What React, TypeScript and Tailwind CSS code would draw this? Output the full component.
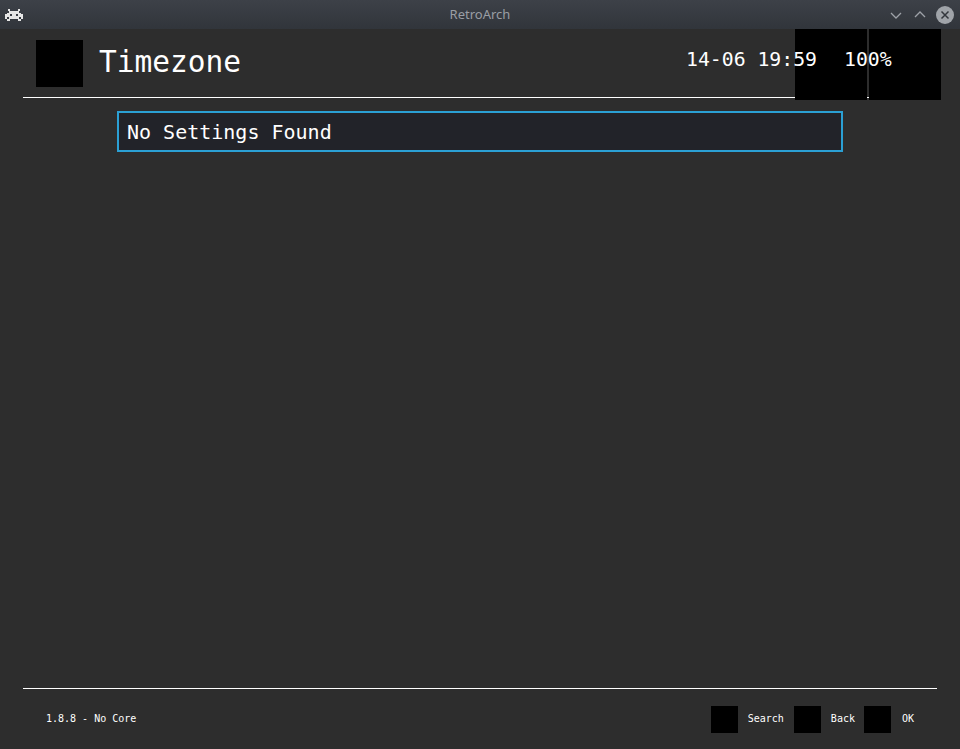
import React from "react";

const mono = "font-['DejaVu_Sans_Mono','Liberation_Mono',monospace]";

function TitleBar() {
  return (
    <div className="relative flex h-[29px] items-center bg-gradient-to-b from-[#3d4148] to-[#31353b]">
      {/* app icon */}
      <svg width="18" height="12" viewBox="0 0 18 12" className="ml-[5px]" shapeRendering="crispEdges">
        <g fill="#e6e6e6">
          <rect x="3" y="0" width="2" height="2" />
          <rect x="13" y="0" width="2" height="2" />
          <rect x="4" y="2" width="10" height="2" />
          <rect x="2" y="4" width="14" height="4" />
          <rect x="0" y="5" width="2" height="5" />
          <rect x="16" y="5" width="2" height="5" />
          <rect x="4" y="8" width="10" height="2" />
          <rect x="2" y="10" width="3" height="2" />
          <rect x="13" y="10" width="3" height="2" />
        </g>
        <g fill="#3a3e45">
          <rect x="5" y="5" width="2" height="2" />
          <rect x="11" y="5" width="2" height="2" />
        </g>
      </svg>
      <div className="absolute inset-x-0 top-0 flex h-full items-center justify-center">
        <span className="font-['Noto_Sans',sans-serif] text-[13px] text-[#9a9ea4]">RetroArch</span>
      </div>
      <div className="ml-auto mr-[6px] flex items-center gap-[8px]">
        <svg width="16" height="16" viewBox="0 0 16 16" fill="none" stroke="#9ea2a8" strokeWidth="1.3">
          <path d="M3 6 L8 11 L13 6" />
        </svg>
        <svg width="16" height="16" viewBox="0 0 16 16" fill="none" stroke="#9ea2a8" strokeWidth="1.3">
          <path d="M3 10 L8 5 L13 10" />
        </svg>
        <svg width="18" height="18" viewBox="0 0 18 18">
          <circle cx="9" cy="9" r="9" fill="#a0a4a9" />
          <path d="M5.5 5.5 L12.5 12.5 M12.5 5.5 L5.5 12.5" stroke="#33373d" strokeWidth="1.5" />
        </svg>
      </div>
    </div>
  );
}

export default function App() {
  return (
    <div className={`flex h-[749px] w-[960px] flex-col overflow-hidden bg-[#2d2d2d] text-white ${mono}`}>
      <TitleBar />
      <div className="relative flex flex-1 flex-col">
        {/* thumbnail placeholders overlaying the header */}
        <div className="absolute left-[795px] top-0 h-[71px] w-[72px] bg-black" />
        <div className="absolute left-[869px] top-0 h-[71px] w-[72px] bg-black" />

        <div className="relative flex h-[68px] items-center pl-[36px]">
          <div className="h-[47px] w-[47px] bg-black" />
          <span className="ml-[16px] text-[29.5px] leading-none">Timezone</span>
          <span className="absolute left-[686px] top-[21px] text-[19.8px] leading-none">14-06 19:59</span>
          <span className="absolute left-[844px] top-[21px] text-[19.8px] leading-none">100%</span>
        </div>
        <div className="mx-[23px] h-px bg-white" />

        <div className="ml-[117px] mt-[13px] flex h-[41px] w-[726px] items-center border-2 border-[#2ba0d4] bg-[#222329] pl-[8px]">
          <span className="text-[20px] leading-none">No Settings Found</span>
        </div>

        <div className="flex-1" />

        <div className="mx-[23px] h-px bg-white" />
        <div className="flex h-[60px] items-center pl-[46px] pr-[46px]">
          <span className="text-[10px] leading-none">1.8.8 - No Core</span>
          <div className="ml-auto flex items-center">
            <div className="h-[27px] w-[27px] bg-black" />
            <span className="ml-[10px] text-[10px] leading-none">Search</span>
            <div className="ml-[10px] h-[27px] w-[27px] bg-black" />
            <span className="ml-[10px] text-[10px] leading-none">Back</span>
            <div className="ml-[9px] h-[27px] w-[27px] bg-black" />
            <span className="ml-[11px] text-[10px] leading-none">OK</span>
          </div>
        </div>
      </div>
    </div>
  );
}
